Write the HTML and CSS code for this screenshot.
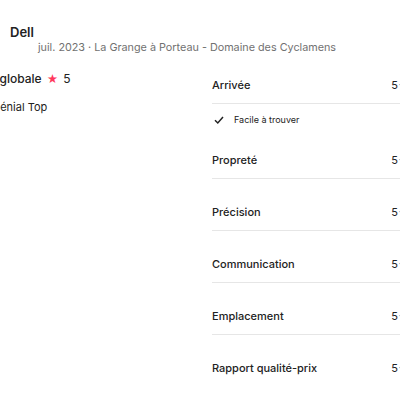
FILE: index.html
```html
<!DOCTYPE html>
<html lang="fr">
<head>
    <meta charset="UTF-8">
    <meta name="viewport" content="width=device-width, initial-scale=1.0">
    <title>Avis</title>
    <link rel="stylesheet" href="styles.css">
</head>
<body>
    <div class="review">
        <div class="review-header">
            <div class="name">Dell</div>
            <div class="meta">juil. 2023 · La Grange à Porteau - Domaine des Cyclamens</div>
        </div>

        <div class="review-body">
            <div class="overall">
                <div class="overall-score">
                    <span>Note globale</span>
                    <span class="star red">★</span>
                    <span class="num">5</span>
                </div>
                <p class="comment">Génial Top</p>
            </div>

            <ul class="categories">
                <li class="category first">
                    <span>Arrivée</span>
                    <span class="score">5 <svg class="mini-star" viewBox="0 0 10 10"><path d="M5 .5 6.3 3.6 9.7 3.9 7.1 6.1 7.9 9.4 5 7.7 2.1 9.4 2.9 6.1.3 3.9 3.7 3.6Z"/></svg></span>
                </li>
                <li class="tags">
                    <svg width="10" height="10" viewBox="0 0 10 10"><path d="M1 5.2 L3.8 8 L9 2" fill="none" stroke="#222" stroke-width="1.5"/></svg>
                    <span>Facile à trouver</span>
                </li>
                <li class="category">
                    <span>Propreté</span>
                    <span class="score">5 <svg class="mini-star" viewBox="0 0 10 10"><path d="M5 .5 6.3 3.6 9.7 3.9 7.1 6.1 7.9 9.4 5 7.7 2.1 9.4 2.9 6.1.3 3.9 3.7 3.6Z"/></svg></span>
                </li>
                <li class="category">
                    <span>Précision</span>
                    <span class="score">5 <svg class="mini-star" viewBox="0 0 10 10"><path d="M5 .5 6.3 3.6 9.7 3.9 7.1 6.1 7.9 9.4 5 7.7 2.1 9.4 2.9 6.1.3 3.9 3.7 3.6Z"/></svg></span>
                </li>
                <li class="category">
                    <span>Communication</span>
                    <span class="score">5 <svg class="mini-star" viewBox="0 0 10 10"><path d="M5 .5 6.3 3.6 9.7 3.9 7.1 6.1 7.9 9.4 5 7.7 2.1 9.4 2.9 6.1.3 3.9 3.7 3.6Z"/></svg></span>
                </li>
                <li class="category">
                    <span>Emplacement</span>
                    <span class="score">5 <svg class="mini-star" viewBox="0 0 10 10"><path d="M5 .5 6.3 3.6 9.7 3.9 7.1 6.1 7.9 9.4 5 7.7 2.1 9.4 2.9 6.1.3 3.9 3.7 3.6Z"/></svg></span>
                </li>
                <li class="category">
                    <span>Rapport qualité-prix</span>
                    <span class="score">5 <svg class="mini-star" viewBox="0 0 10 10"><path d="M5 .5 6.3 3.6 9.7 3.9 7.1 6.1 7.9 9.4 5 7.7 2.1 9.4 2.9 6.1.3 3.9 3.7 3.6Z"/></svg></span>
                </li>
            </ul>
        </div>
    </div>
</body>
</html>
```

FILE: styles.css
```css
body {
    margin: 0;
    background-color: #fff;
    color: #222;
    font-family: Inter, "Noto Sans", Arial, sans-serif;
    overflow: hidden;
}

.review-header {
    padding: 24px 0 0 10px;
}

.name {
    font-size: 13px;
    font-weight: 600;
    line-height: 16px;
}

.meta {
    margin-left: 28px;
    font-size: 10.8px;
    line-height: 16px;
    color: #717171;
}

.review-body {
    display: grid;
    grid-template-columns: 240px 196px;
    margin-left: -28px;
}

.overall {
    padding-top: 15px;
}

.overall-score {
    display: flex;
    align-items: center;
    gap: 5px;
    font-size: 12px;
    font-weight: 500;
    line-height: 16px;
    margin-left: -3px;
}

.overall-score .num {
    font-weight: 400;
}

.star {
    font-size: 11px;
}

.star.red {
    color: #ff385c;
}

.comment {
    margin: 12px 0 0 20px;
    font-size: 11px;
    line-height: 16px;
}

.categories {
    list-style-type: none;
    margin: 0;
    padding: 0;
}

.category {
    display: flex;
    justify-content: space-between;
    padding: 25px 0 10px;
    font-size: 11px;
    font-weight: 500;
    line-height: 16px;
    border-bottom: 1px solid #e6e6e6;
}

.category.first {
    padding-top: 21px;
}

.category:last-child {
    border-bottom: none;
}

.score {
    display: flex;
    align-items: center;
    gap: 1px;
    font-weight: 400;
}

.mini-star {
    width: 9px;
    height: 9px;
    fill: #222;
}

.tags {
    display: flex;
    align-items: center;
    gap: 10px;
    margin-top: 9px;
    padding-left: 2px;
    font-size: 9px;
    line-height: 14px;
}
```
